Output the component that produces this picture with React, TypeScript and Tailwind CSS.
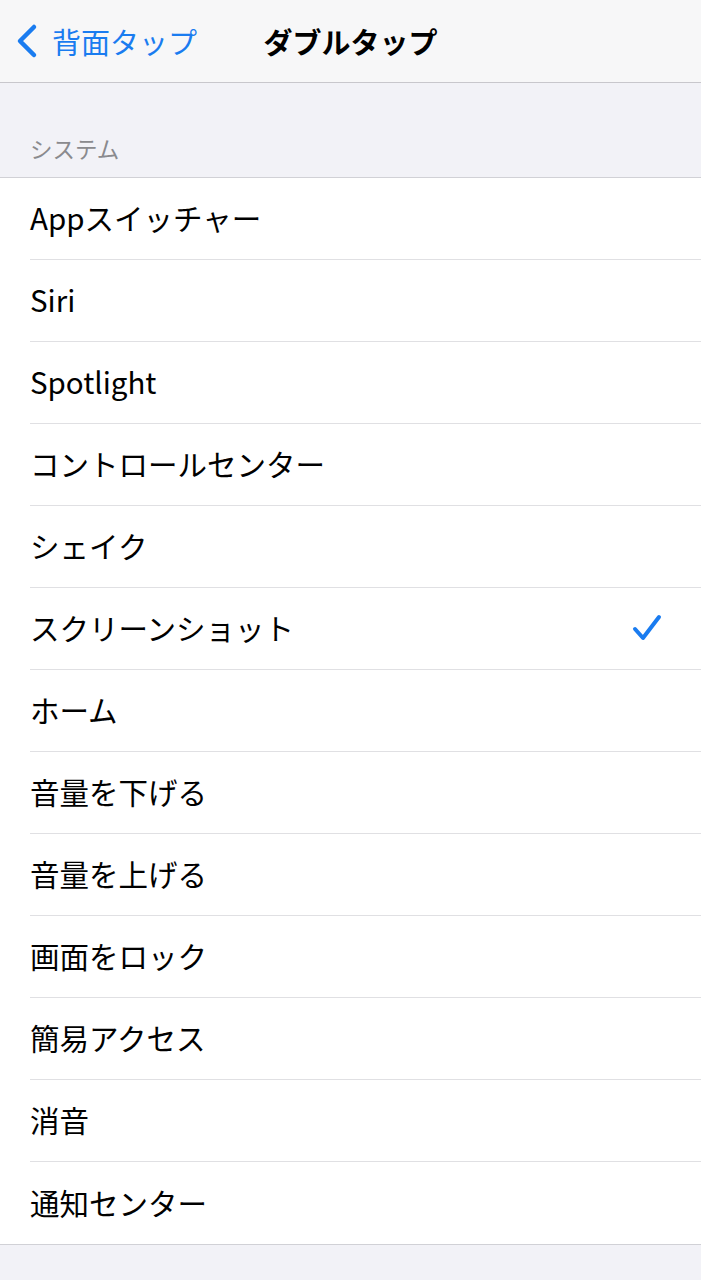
import React from 'react';

const items = [
  'Appスイッチャー',
  'Siri',
  'Spotlight',
  'コントロールセンター',
  'シェイク',
  'スクリーンショット',
  'ホーム',
  '音量を下げる',
  '音量を上げる',
  '画面をロック',
  '簡易アクセス',
  '消音',
  '通知センター',
];

const selected = 'スクリーンショット';

const App = () => {
  return (
    <div
      className="min-h-[1280px] bg-[#f2f2f7] text-black"
      style={{ fontFamily: '"Noto Sans CJK JP", "Noto Sans", sans-serif' }}
    >
      {/* nav bar */}
      <div className="relative flex h-[83px] items-center border-b border-[#c8c7cc] bg-[#f7f7f8]">
        <div className="flex items-center pl-[14px] text-[#1a7cf0]">
          <svg width="26" height="36" viewBox="0 0 26 36" fill="none">
            <path d="M20 4 L6 18 L20 32" stroke="currentColor" strokeWidth="4.5" strokeLinecap="round" strokeLinejoin="round" />
          </svg>
          <span className="ml-[12px] text-[29px] leading-none">背面タップ</span>
        </div>
        <div className="pointer-events-none absolute left-0 right-0 text-center text-[29px] font-bold leading-none">
          ダブルタップ
        </div>
      </div>

      {/* section header */}
      <div className="px-[30px] pt-[54px] pb-[17px] text-[22.5px] leading-none text-[#8a8a8e]">システム</div>

      {/* list */}
      <div className="border-y border-[#d1d1d6] bg-white">
        {items.map((item, i) => (
          <div key={item} className="pl-[30px]">
            <div
              className={`flex h-[82px] items-center pr-[38px] ${i < items.length - 1 ? 'border-b border-[#e0e0e3]' : ''}`}
            >
              <span className="flex-1 text-[29.5px] leading-none">{item}</span>
              {item === selected && (
                <svg width="32" height="30" viewBox="0 0 32 30" fill="none" className="text-[#1a7cf0]">
                  <path d="M4 16 L12 25 L28 4" stroke="currentColor" strokeWidth="4" strokeLinecap="round" strokeLinejoin="round" />
                </svg>
              )}
            </div>
          </div>
        ))}
      </div>
    </div>
  );
};

export default App;
